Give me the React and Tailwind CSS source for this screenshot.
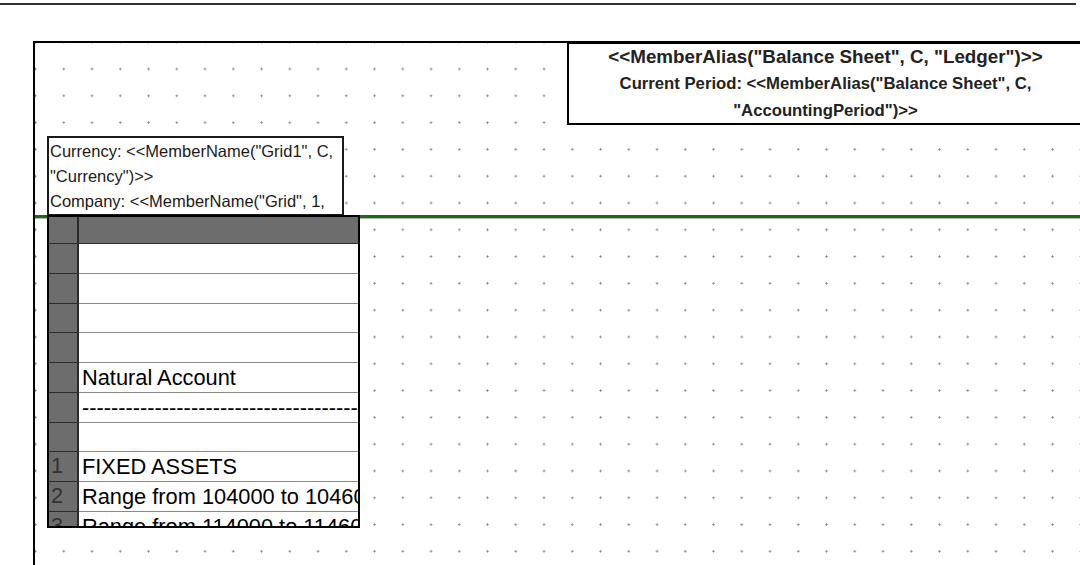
const ROWS = [
  { n: '', text: '' },
  { n: '', text: '' },
  { n: '', text: '' },
  { n: '', text: '' },
  { n: '', text: 'Natural Account' },
  { n: '', text: '------------------------------------------------------------' },
  { n: '', text: '' },
  { n: '1', text: 'FIXED ASSETS' },
  { n: '2', text: 'Range from 104000 to 104600' },
  { n: '3', text: 'Range from 114000 to 114600' },
]

function GridRow({ n, text }) {
  return (
    <div className="flex h-[29.75px] shrink-0">
      <div className="w-[30px] shrink-0 border-b border-r-2 border-[#2b2b2b] bg-[#6d6d6d] pl-[2px] text-[21.8px] leading-[28px] text-[#333]">
        {n}
      </div>
      <div className="min-w-0 flex-1 overflow-hidden whitespace-nowrap border-b border-[#8a8a8a] pl-[3px] text-[21.8px] leading-[29px] text-black">
        {text}
      </div>
    </div>
  )
}

export default function App() {
  return (
    <div className="h-[565px] w-[1080px] overflow-hidden bg-white font-['Liberation_Sans',Arial,sans-serif]">
      <div className="mt-[3px] h-[2px] w-[1076px] bg-[#333]" />

      <div className="ml-[33px] mt-[36px] h-[600px] border-l-2 border-t-2 border-black bg-[radial-gradient(circle,#808080_0.8px,transparent_1.4px)] bg-[length:28.25px_26.8px] bg-[position:-13.6px_12.6px]">
        {/* report header */}
        <div className="-mt-[2px] ml-[532px] h-[84px] w-[600px] border-b-2 border-l-2 border-t-[3px] border-black bg-white font-bold text-[#222]">
          <div className="w-[513px] whitespace-nowrap text-center">
            <div className="mt-[1px] text-[18.8px] leading-[24px]">
              &lt;&lt;MemberAlias("Balance Sheet", C, "Ledger")&gt;&gt;
            </div>
            <div className="mt-[2px] text-[16.7px] leading-[26px]">
              Current Period: &lt;&lt;MemberAlias("Balance Sheet", C,
            </div>
            <div className="mt-[1px] text-[16.7px] leading-[26px]">
              "AccountingPeriod")&gt;&gt;
            </div>
          </div>
        </div>

        {/* currency / company box */}
        <div className="relative z-10 ml-[12px] mt-[11px] h-[80px] w-[297px] overflow-hidden border-2 border-[#1a1a1a] bg-white pl-[1px] pt-[1px] text-[16.5px] leading-[25px] text-[#1a1a1a]">
          <div>Currency: &lt;&lt;MemberName("Grid1", C, "Currency")&gt;&gt;</div>
          <div>Company: &lt;&lt;MemberName("Grid", 1, "Company")&gt;&gt;</div>
        </div>

        <div className="-mt-[1px] h-[4px] border-b border-[#b5b5b5] bg-[#1d6b10]" />

        {/* grid */}
        <div className="relative z-20 -mt-[4px] ml-[12px] flex h-[313px] w-[313px] flex-col overflow-hidden border-2 border-black bg-white">
          <div className="flex h-[27px] shrink-0">
            <div className="w-[30px] shrink-0 border-b border-r-2 border-[#2b2b2b] bg-[#6d6d6d]" />
            <div className="flex-1 border-b border-[#2b2b2b] bg-[#6d6d6d]" />
          </div>
          {ROWS.map((r, idx) => (
            <GridRow key={idx} n={r.n} text={r.text} />
          ))}
        </div>
      </div>
    </div>
  )
}
